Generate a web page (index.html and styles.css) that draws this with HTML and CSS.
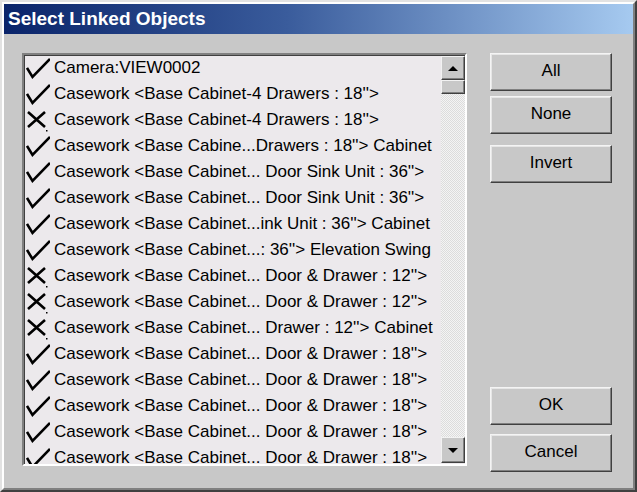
FILE: index.html
```html
<!DOCTYPE html>
<html>
<head>
<meta charset="utf-8">
<link rel="stylesheet" href="styles.css">
</head>
<body>
<div class="window">
  <div class="frame">
    <div class="titlebar">Select Linked Objects</div>
    <div class="content">
      <div class="listbox">
        <div class="items">
          <div class="row"><svg class="ico" viewBox="0 0 24 26"><path class="tick" d="M1 12 L6.5 21 L24 3"/></svg><span>Camera:VIEW0002</span></div>
          <div class="row"><svg class="ico" viewBox="0 0 24 26"><path class="tick" d="M1 12 L6.5 21 L24 3"/></svg><span>Casework &lt;Base Cabinet-4 Drawers : 18''&gt;</span></div>
          <div class="row"><svg class="ico" viewBox="0 0 24 26"><path class="cross" d="M2 4 L19 19 M19 4 L2 19"/><rect x="20" y="22" width="1.5" height="1.5"/></svg><span>Casework &lt;Base Cabinet-4 Drawers : 18''&gt;</span></div>
          <div class="row"><svg class="ico" viewBox="0 0 24 26"><path class="tick" d="M1 12 L6.5 21 L24 3"/></svg><span>Casework &lt;Base Cabine...Drawers : 18''&gt; Cabinet</span></div>
          <div class="row"><svg class="ico" viewBox="0 0 24 26"><path class="tick" d="M1 12 L6.5 21 L24 3"/></svg><span>Casework &lt;Base Cabinet... Door Sink Unit : 36''&gt;</span></div>
          <div class="row"><svg class="ico" viewBox="0 0 24 26"><path class="tick" d="M1 12 L6.5 21 L24 3"/></svg><span>Casework &lt;Base Cabinet... Door Sink Unit : 36''&gt;</span></div>
          <div class="row"><svg class="ico" viewBox="0 0 24 26"><path class="tick" d="M1 12 L6.5 21 L24 3"/></svg><span>Casework &lt;Base Cabinet...ink Unit : 36''&gt; Cabinet</span></div>
          <div class="row"><svg class="ico" viewBox="0 0 24 26"><path class="tick" d="M1 12 L6.5 21 L24 3"/></svg><span>Casework &lt;Base Cabinet...: 36''&gt; Elevation Swing</span></div>
          <div class="row"><svg class="ico" viewBox="0 0 24 26"><path class="cross" d="M2 4 L19 19 M19 4 L2 19"/><rect x="20" y="22" width="1.5" height="1.5"/></svg><span>Casework &lt;Base Cabinet... Door &amp; Drawer : 12''&gt;</span></div>
          <div class="row"><svg class="ico" viewBox="0 0 24 26"><path class="cross" d="M2 4 L19 19 M19 4 L2 19"/><rect x="20" y="22" width="1.5" height="1.5"/></svg><span>Casework &lt;Base Cabinet... Door &amp; Drawer : 12''&gt;</span></div>
          <div class="row"><svg class="ico" viewBox="0 0 24 26"><path class="cross" d="M2 4 L19 19 M19 4 L2 19"/><rect x="20" y="22" width="1.5" height="1.5"/></svg><span>Casework &lt;Base Cabinet... Drawer : 12''&gt; Cabinet</span></div>
          <div class="row"><svg class="ico" viewBox="0 0 24 26"><path class="tick" d="M1 12 L6.5 21 L24 3"/></svg><span>Casework &lt;Base Cabinet... Door &amp; Drawer : 18''&gt;</span></div>
          <div class="row"><svg class="ico" viewBox="0 0 24 26"><path class="tick" d="M1 12 L6.5 21 L24 3"/></svg><span>Casework &lt;Base Cabinet... Door &amp; Drawer : 18''&gt;</span></div>
          <div class="row"><svg class="ico" viewBox="0 0 24 26"><path class="tick" d="M1 12 L6.5 21 L24 3"/></svg><span>Casework &lt;Base Cabinet... Door &amp; Drawer : 18''&gt;</span></div>
          <div class="row"><svg class="ico" viewBox="0 0 24 26"><path class="tick" d="M1 12 L6.5 21 L24 3"/></svg><span>Casework &lt;Base Cabinet... Door &amp; Drawer : 18''&gt;</span></div>
          <div class="row"><svg class="ico" viewBox="0 0 24 26"><path class="tick" d="M1 12 L6.5 21 L24 3"/></svg><span>Casework &lt;Base Cabinet... Door &amp; Drawer : 18''&gt;</span></div>
        </div>
        <div class="scrollbar">
          <div class="sbtn"><span class="arrow-up"></span></div>
          <div class="thumb"></div>
          <div class="track"></div>
          <div class="sbtn down"><span class="arrow-down"></span></div>
        </div>
      </div>
      <div class="buttons">
        <div class="group">
          <div class="btn">All</div>
          <div class="btn g1">None</div>
          <div class="btn g2">Invert</div>
        </div>
        <div class="group">
          <div class="btn">OK</div>
          <div class="btn g3">Cancel</div>
        </div>
      </div>
    </div>
  </div>
</div>
</body>
</html>
```
FILE: styles.css
```css
* { box-sizing: border-box; }
html, body { margin: 0; padding: 0; }
body {
  width: 637px;
  height: 492px;
  background: #c8c8c8;
  font-family: "Liberation Sans", Arial, sans-serif;
  overflow: hidden;
}
.window {
  width: 637px;
  height: 492px;
  border: 2px solid;
  border-color: #e2e2e2 #404040 #404040 #e2e2e2;
  background: #c8c8c8;
}
.frame {
  height: 100%;
  border: 2px solid;
  border-color: #ffffff #808080 #808080 #ffffff;
  display: flex;
  flex-direction: column;
}
.titlebar {
  height: 30px;
  flex: none;
  background: linear-gradient(to right, #0a246a 0%, #3a5c9c 45%, #a6caf0 100%);
  color: #fff;
  font-weight: bold;
  font-size: 19px;
  line-height: 30px;
  padding-left: 4px;
  white-space: nowrap;
}
.content {
  display: flex;
  padding: 19px 0 0 18px;
}
.listbox {
  width: 445px;
  height: 413px;
  border: 2px solid;
  border-color: #808080 #ffffff #ffffff #808080;
  box-shadow: inset 1px 1px 0 #404040;
  background: #ece9ec;
  display: flex;
  padding: 1px 0 0 1px;
}
.items {
  flex: 1;
  overflow: hidden;
}
.row {
  height: 26px;
  display: flex;
  align-items: flex-start;
  font-size: 17px;
  line-height: 23px;
  white-space: nowrap;
  color: #000;
}
.ico {
  width: 24px;
  height: 26px;
  margin-left: 1px;
  margin-right: 4px;
  flex: none;
}
.tick {
  fill: none;
  stroke: #000;
  stroke-width: 2.6;
  stroke-linejoin: miter;
  stroke-linecap: butt;
}
.cross {
  fill: none;
  stroke: #000;
  stroke-width: 2.6;
}
.scrollbar {
  width: 24px;
  flex: none;
  display: flex;
  flex-direction: column;
  padding-bottom: 1px;
}
.sbtn {
  height: 24px;
  flex: none;
  background: #c8c8c8;
  border: 1px solid;
  border-color: #f2f2f2 #404040 #404040 #f2f2f2;
  box-shadow: inset -1px -1px 0 #808080;
  display: flex;
  align-items: center;
  justify-content: center;
}
.sbtn.down { height: 26px; }
.thumb {
  height: 14px;
  flex: none;
  background: #c8c8c8;
  border: 1px solid;
  border-color: #f2f2f2 #404040 #404040 #f2f2f2;
  box-shadow: inset -1px -1px 0 #808080;
}
.track {
  flex: 1;
  background-color: #f2f2f2;
  background-image: repeating-conic-gradient(#dcdcdc 0 25%, #f4f4f4 0 50%);
  background-size: 2px 2px;
}
.arrow-up {
  width: 0; height: 0;
  border-left: 5px solid transparent;
  border-right: 5px solid transparent;
  border-bottom: 5px solid #000;
}
.arrow-down {
  width: 0; height: 0;
  border-left: 5px solid transparent;
  border-right: 5px solid transparent;
  border-top: 5px solid #000;
}
.buttons {
  margin-left: 23px;
  width: 122px;
  height: 419px;
  display: flex;
  flex-direction: column;
  justify-content: space-between;
}
.group {
  display: flex;
  flex-direction: column;
}
.btn {
  height: 38px;
  border: 1px solid;
  border-color: #f4f4f4 #404040 #404040 #f4f4f4;
  box-shadow: inset -1px -1px 0 #808080, inset 1px 1px 0 #e6e6e6;
  background: #c8c8c8;
  font-size: 17px;
  line-height: 34px;
  text-align: center;
  color: #000;
}
.g1 { margin-top: 5px; }
.g2 { margin-top: 11px; }
.g3 { margin-top: 9px; }
```
